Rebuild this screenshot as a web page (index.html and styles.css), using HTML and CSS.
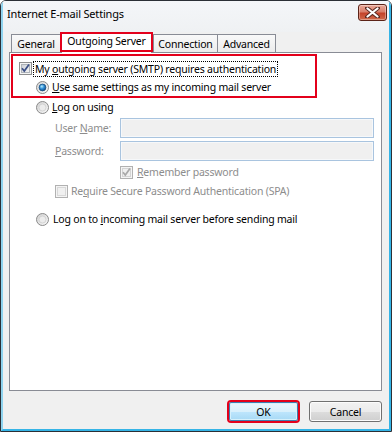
FILE: index.html
```html
<!DOCTYPE html>
<html>
<head>
<meta charset="utf-8">
<link rel="stylesheet" href="styles.css">
</head>
<body>
<div class="window">
  <div class="frame">
    <div class="titlebar">
      <span class="title">Internet E-mail Settings</span>
      <div class="close">
        <svg width="15" height="11" viewBox="0 0 15 11"><path d="M2 1 L13 10 M13 1 L2 10" stroke="#5a2a22" stroke-width="4" stroke-linecap="round"/><path d="M2.5 1.5 L12.5 9.5 M12.5 1.5 L2.5 9.5" stroke="#fff" stroke-width="2.2" stroke-linecap="round"/></svg>
      </div>
    </div>
    <div class="client">
      <div class="tabs">
        <div class="tab t-general">General</div>
        <div class="tab t-out selected">Outgoing Server</div>
        <div class="tab t-conn">Connection</div>
        <div class="tab t-adv">Advanced</div>
      </div>
      <div class="panel">
        <div class="highlight">
          <div class="row r1">
            <svg class="cb" width="13" height="13" viewBox="0 0 13 13"><defs><linearGradient id="cbg" x1="0" y1="0" x2="1" y2="1"><stop offset="0" stop-color="#cbcfd5"/><stop offset="1" stop-color="#f6f6f6"/></linearGradient></defs><rect x="0.5" y="0.5" width="12" height="12" fill="#f4f4f4" stroke="#8e8f8f"/><rect x="2.5" y="2.5" width="8" height="8" fill="url(#cbg)" stroke="#aeb3b9"/><path d="M3 6.2 L5.3 9 L10 2.6" stroke="#3b4f86" stroke-width="1.7" fill="none"/></svg>
            <span class="label focus">My <u>o</u>utgoing server (SMTP) requires authentication</span>
          </div>
          <div class="row r2">
            <svg class="rb" width="13" height="13" viewBox="0 0 13 13"><defs><linearGradient id="rbo" x1="0" y1="0" x2="1" y2="1"><stop offset="0" stop-color="#d5d5d5"/><stop offset="1" stop-color="#fafafa"/></linearGradient><radialGradient id="rbd" cx="0.4" cy="0.35" r="0.7"><stop offset="0" stop-color="#b6ecfc"/><stop offset="0.5" stop-color="#2a8ad4"/><stop offset="1" stop-color="#12477e"/></radialGradient></defs><circle cx="6.5" cy="6.5" r="6" fill="url(#rbo)" stroke="#8a8a8a"/><circle cx="6.5" cy="6.5" r="3.4" fill="url(#rbd)" stroke="#1d4f7d" stroke-width="0.8"/></svg>
            <span class="label"><u>U</u>se same settings as my incoming mail server</span>
          </div>
        </div>
        <div class="row r3">
          <svg class="rb" width="13" height="13" viewBox="0 0 13 13"><defs><linearGradient id="rbo2" x1="0" y1="0" x2="1" y2="1"><stop offset="0" stop-color="#cfcfcf"/><stop offset="1" stop-color="#fbfbfb"/></linearGradient></defs><circle cx="6.5" cy="6.5" r="6" fill="url(#rbo2)" stroke="#8a8a8a"/><circle cx="6.5" cy="6.5" r="3.5" fill="#ececec" stroke="#c4c4c4" stroke-width="0.6"/></svg>
          <span class="label"><u>L</u>og on using</span>
        </div>
        <div class="field f1">
          <span class="flabel">User <u>N</u>ame:</span>
          <div class="input"></div>
        </div>
        <div class="field f2">
          <span class="flabel"><u>P</u>assword:</span>
          <div class="input"></div>
        </div>
        <div class="row r4">
          <svg class="cb" width="13" height="13" viewBox="0 0 13 13"><rect x="0.5" y="0.5" width="12" height="12" fill="#f4f4f4" stroke="#b1b1b1"/><rect x="2.5" y="2.5" width="8" height="8" fill="#f0f0f0" stroke="#d4d4d4"/><path d="M3 6.2 L5.3 9 L10 2.6" stroke="#a9a9a9" stroke-width="1.7" fill="none"/></svg>
          <span class="label dis"><u>R</u>emember password</span>
        </div>
        <div class="row r5">
          <svg class="cb" width="13" height="13" viewBox="0 0 13 13"><rect x="0.5" y="0.5" width="12" height="12" fill="#f4f4f4" stroke="#b1b1b1"/><rect x="2.5" y="2.5" width="8" height="8" fill="#f0f0f0" stroke="#d8d8d8"/></svg>
          <span class="label dis">Re<u>q</u>uire Secure Password Authentication (SPA)</span>
        </div>
        <div class="row r6">
          <svg class="rb" width="13" height="13" viewBox="0 0 13 13"><defs><linearGradient id="rbo3" x1="0" y1="0" x2="1" y2="1"><stop offset="0" stop-color="#cfcfcf"/><stop offset="1" stop-color="#fbfbfb"/></linearGradient></defs><circle cx="6.5" cy="6.5" r="6" fill="url(#rbo3)" stroke="#8a8a8a"/><circle cx="6.5" cy="6.5" r="3.5" fill="#ececec" stroke="#c4c4c4" stroke-width="0.6"/></svg>
          <span class="label">Log on to <u>i</u>ncoming mail server before sending mail</span>
        </div>
      </div>
      <div class="buttons">
        <button class="btn ok">OK</button>
        <button class="btn cancel">Cancel</button>
      </div>
    </div>
  </div>
</div>
</body>
</html>
```
FILE: styles.css
```css
html, body {
  margin: 0;
  padding: 0;
  background: #ffffff;
}
body {
  font-family: "Noto Sans", "Open Sans", sans-serif;
  font-size: 10.5px;
  letter-spacing: -0.2px;
  color: #000;
}
.window {
  width: 392px;
  height: 432px;
  box-sizing: border-box;
  border: 1px solid #2b2f36;
  border-radius: 6px 6px 0 0;
  background: #f0f0f0;
  overflow: hidden;
}
.frame {
  height: 430px;
  box-sizing: border-box;
  border-left: 2px solid #8fd3ee;
  border-right: 2px solid #35b4e6;
  border-bottom: 2px solid #35b4e6;
  display: flex;
  flex-direction: column;
  background: #f0f0f0;
}
.titlebar {
  height: 31px;
  flex: none;
  display: flex;
  justify-content: space-between;
  align-items: flex-start;
  background: linear-gradient(#f4f6f9, #eff1f3);
}
.title {
  padding: 5px 0 0 4px;
  font-size: 11px;
  line-height: 16px;
  color: #000;
}
.close {
  margin: 3px 2px 0 0;
  width: 29px;
  height: 17px;
  box-sizing: border-box;
  border: 1px solid #5b2318;
  border-radius: 3px;
  background: linear-gradient(#eaa99a 0%, #d9806c 45%, #c4432a 55%, #d06a4b 100%);
  box-shadow: inset 0 0 0 1px rgba(255,255,255,0.35);
  display: flex;
  align-items: center;
  justify-content: center;
}
.client {
  flex: 1;
  display: flex;
  flex-direction: column;
}
.tabs {
  height: 21px;
  margin-left: 8px;
  display: flex;
  align-items: flex-end;
  flex: none;
}
.tab {
  height: 19px;
  box-sizing: border-box;
  border: 1px solid #898c95;
  border-bottom: none;
  background: linear-gradient(#f9f9f9, #ebebeb);
  display: flex;
  justify-content: center;
  align-items: center;
  padding-bottom: 1px;
  color: #000;
}
.t-general { width: 49px; border-right: none; }
.t-out { width: 93px; }
.t-conn { width: 64px; border-right: none; }
.t-adv { width: 59px; }
.tab.selected {
  position: relative;
  z-index: 1;
  height: 20px;
  margin-bottom: 1px;
  border: 2px solid #e3001b;
  background: #ffffff;
  padding-bottom: 2px;
}
.tab.selected::after {
  content: "";
  position: absolute;
  left: 0;
  right: 0;
  bottom: -3px;
  height: 1px;
  background: #ffffff;
}
.panel {
  margin: -1px 7px 0 6px;
  height: 339px;
  box-sizing: border-box;
  border: 1px solid #898c95;
  background: #ffffff;
  flex: none;
}
.highlight {
  margin: 1px 0 0 1px;
  width: 306px;
  height: 44px;
  box-sizing: border-box;
  border: 2px solid #e3001b;
  padding-top: 3px;
}
.row {
  display: flex;
  align-items: center;
}
.row svg { flex: none; display: block; }
.label { white-space: nowrap; line-height: 14px; }
.r1 { height: 19px; padding-left: 6px; }
.r1 .label { margin-left: 2px; padding: 0 1px; outline: 1px dotted #000; outline-offset: 0; }
.r2 { height: 18px; padding-left: 23px; }
.r2 .label { margin-left: 3px; }
.r3 { height: 18px; padding-left: 26px; }
.r3 .label { margin-left: 3px; }
.field {
  display: flex;
  align-items: center;
  height: 20px;
  padding-left: 45px;
}
.f1 { margin-top: 2px; }
.f2 { margin-top: 3px; }
.flabel {
  width: 65px;
  color: #8d8d8d;
  white-space: nowrap;
}
.input {
  width: 254px;
  height: 20px;
  box-sizing: border-box;
  border: 1px solid #a9c4df;
  background: #f0f0f0;
  box-shadow: inset 0 0 0 1px #f6f8fa;
}
.r4 { height: 18px; margin-top: 2px; padding-left: 110px; }
.r4 .label { margin-left: 4px; }
.r5 { height: 18px; margin-top: 1px; padding-left: 45px; }
.r5 .label { margin-left: 3px; }
.r6 { height: 18px; margin-top: 10px; padding-left: 26px; }
.r6 .label { margin-left: 4px; }
.dis { color: #8d8d8d; }
.buttons {
  display: flex;
  justify-content: flex-end;
  align-items: center;
  height: 21px;
  margin-top: 10px;
  padding-right: 7px;
}
.btn {
  font-family: "Noto Sans", "Open Sans", sans-serif;
  font-size: 10.5px;
  letter-spacing: -0.2px;
  color: #000;
  height: 21px;
  width: 73px;
  padding: 0;
  box-sizing: border-box;
  border: 1px solid #707070;
  border-radius: 3px;
  background: linear-gradient(#f2f2f2 0%, #ebebeb 50%, #dddddd 51%, #cfcfcf 100%);
  box-shadow: inset 0 0 0 1px #fcfcfc;
}
.btn.ok {
  width: 69px;
  height: 19px;
  margin-right: 11px;
  border-color: #3c7fb1;
  border-radius: 2px;
  background: linear-gradient(#eaf6fd 0%, #d9f0fc 50%, #bee6fd 51%, #a7d9f5 100%);
  box-shadow: inset 0 0 0 1px #d6f0fb;
  outline: 2px solid #e3001b;
  outline-offset: 0;
}
u { text-decoration: underline; text-underline-offset: 1px; }
```
